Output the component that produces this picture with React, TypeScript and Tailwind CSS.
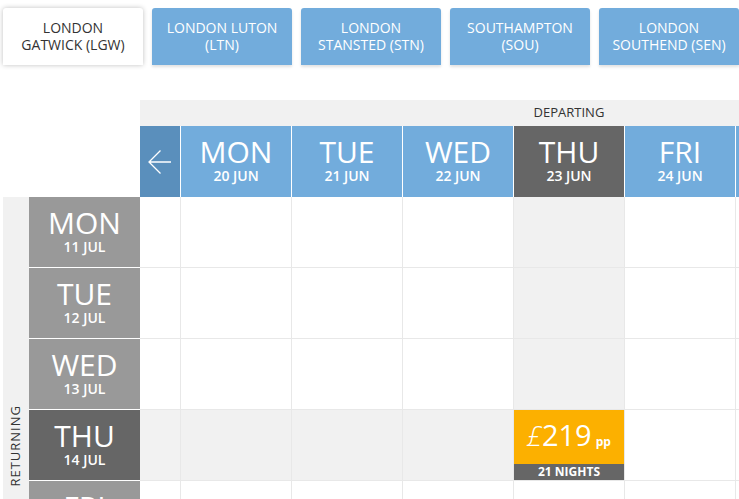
const font = { fontFamily: '"Open Sans", "DejaVu Sans", sans-serif' };

const tabs = [
  ["LONDON", "GATWICK (LGW)"],
  ["LONDON LUTON", "(LTN)"],
  ["LONDON", "STANSTED (STN)"],
  ["SOUTHAMPTON", "(SOU)"],
  ["LONDON", "SOUTHEND (SEN)"],
];

const departDays = [
  ["MON", "20 JUN"],
  ["TUE", "21 JUN"],
  ["WED", "22 JUN"],
  ["THU", "23 JUN"],
  ["FRI", "24 JUN"],
  ["SAT", "25 JUN"],
  ["SUN", "26 JUN"],
];

const returnDays = [
  ["MON", "11 JUL"],
  ["TUE", "12 JUL"],
  ["WED", "13 JUL"],
  ["THU", "14 JUL"],
  ["FRI", "15 JUL"],
  ["SAT", "16 JUL"],
  ["SUN", "17 JUL"],
];

const SEL_ROW = 3;
const SEL_COL = 3;

function Arrow({ dir }: { dir: "left" | "right" }) {
  return (
    <svg width="26" height="26" viewBox="0 0 26 26" fill="none" stroke="white" strokeWidth="1.3" className={dir === "right" ? "rotate-180" : ""}>
      <path d="M24 13H2M13.5 1.5L2 13l11.5 11.5" />
    </svg>
  );
}

function DayLabel({ day, date }: { day: string; date: string }) {
  return (
    <div className="flex flex-col items-center pb-[3px] text-white">
      <span className="text-[30px] leading-[31px]">{day}</span>
      <span className="text-[14px] font-semibold leading-[17px]">{date}</span>
    </div>
  );
}

function PriceCell() {
  return (
    <div className="flex h-full flex-col">
      <div className="flex h-[54px] items-baseline justify-center bg-[#fcb000] pt-[6px] text-white">
        <span className="text-[27px] font-light italic leading-[38px]">£</span>
        <span className="text-[29px] leading-[38px]">219</span>
        <span className="ml-[4px] text-[12px] font-bold">pp</span>
      </div>
      <div className="flex h-[16px] items-center justify-center bg-[#666666] text-[12px] font-bold text-white">
        21 NIGHTS
      </div>
    </div>
  );
}

export default function App() {
  return (
    <div className="h-[499px] w-[739px] overflow-hidden bg-white text-[#333]" style={font}>
      {/* airport tabs */}
      <div className="flex h-[65px] gap-[9px] pl-[3px] pt-[8px]">
        {tabs.map((t, i) => (
          <div
            key={i}
            className={
              "flex h-[57px] w-[140px] shrink-0 flex-col items-center justify-center rounded-t-[3px] pb-[2px] text-[14px] leading-[17px] " +
              (i === 0
                ? "bg-white text-[#333] shadow-[0_0_5px_rgba(0,0,0,0.25)]"
                : "bg-[#72acdc] text-white shadow-[0_2px_3px_rgba(0,0,0,0.12)]")
            }
          >
            <span>{t[0]}</span>
            <span>{t[1]}</span>
          </div>
        ))}
      </div>

      <div className="mt-[35px] flex">
        {/* returning side */}
        <div className="flex w-[140px] shrink-0 flex-col">
          <div className="h-[97px]" />
          <div className="flex pl-[3px]">
            <div className="flex w-[26px] items-center justify-center bg-[#f1f1f1]">
              <span className="rotate-180 text-[13px] tracking-[1px] [writing-mode:vertical-rl]">RETURNING</span>
            </div>
            <div className="flex w-[111px] flex-col">
              {returnDays.map((d, r) => (
                <div
                  key={r}
                  className={
                    "flex h-[71px] items-center justify-center border-b border-white " +
                    (r === SEL_ROW ? "bg-[#666666]" : "bg-[#999999]")
                  }
                >
                  <DayLabel day={d[0]} date={d[1]} />
                </div>
              ))}
            </div>
          </div>
        </div>

        {/* departing grid */}
        <div className="flex w-[858px] shrink-0 flex-col">
          <div className="flex h-[26px] items-center justify-center bg-[#f1f1f1] text-[13px]">DEPARTING</div>
          <div className="flex h-[71px]">
            <div className="flex w-[40px] items-center justify-center bg-[#5a8fbc]">
              <Arrow dir="left" />
            </div>
            {departDays.map((d, c) => (
              <div
                key={c}
                className={
                  "flex w-[111px] items-center justify-center border-l border-white " +
                  (c === SEL_COL ? "bg-[#666666]" : "bg-[#72acdc]")
                }
              >
                <DayLabel day={d[0]} date={d[1]} />
              </div>
            ))}
            <div className="flex w-[41px] items-center justify-center border-l border-white bg-[#5a8fbc]">
              <Arrow dir="right" />
            </div>
          </div>
          {returnDays.map((_, r) => (
            <div key={r} className="flex h-[71px] border-b border-[#e8e8e8]">
              <div className={"w-[40px] " + (r === SEL_ROW ? "bg-[#f2f2f2]" : "")} />
              {departDays.map((_, c) => {
                const hl = (r === SEL_ROW && c < SEL_COL) || (c === SEL_COL && r < SEL_ROW);
                return (
                  <div
                    key={c}
                    className={"w-[111px] border-l border-[#e8e8e8] " + (hl ? "bg-[#f1f1f1]" : "")}
                  >
                    {r === SEL_ROW && c === SEL_COL && <PriceCell />}
                  </div>
                );
              })}
              <div className="w-[41px] border-l border-[#e8e8e8]" />
            </div>
          ))}
        </div>
      </div>
    </div>
  );
}
